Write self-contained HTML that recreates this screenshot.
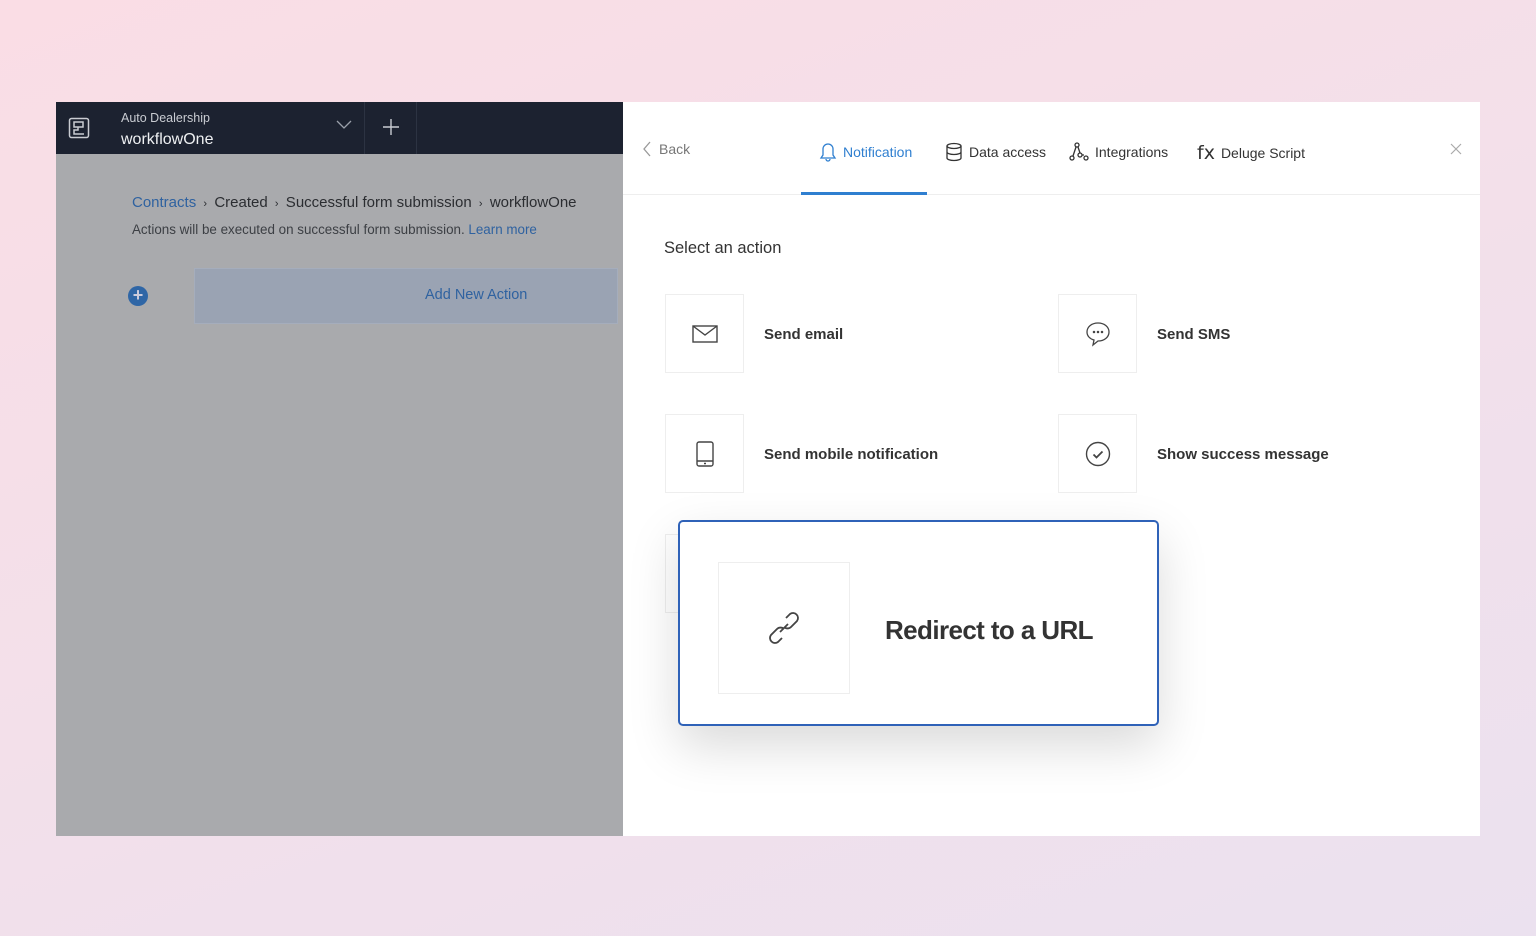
<!DOCTYPE html>
<html><head><meta charset="utf-8"><style>
*{margin:0;padding:0;box-sizing:border-box}
body{width:1536px;height:936px;overflow:hidden;font-family:"Liberation Sans",sans-serif;background:linear-gradient(160deg,#fadde5 0%,#f3e0ea 50%,#ebe1ef 100%);position:relative}
.left{position:absolute;left:56px;top:102px;width:567px;height:734px;background:#a9aaad}
.hdr{position:absolute;left:0;top:0;width:567px;height:52px;background:#1c2230;color:#e4e6ea}
.abs{position:absolute}
.right{position:absolute;left:623px;top:102px;width:857px;height:734px;background:#fff}
.tab{position:absolute;top:40px;font-size:14px;color:#333;display:flex;align-items:center;gap:6px}
.card{position:absolute;width:79px;height:79px;border:1px solid #eee;background:#fff;display:flex;align-items:center;justify-content:center}
.lbl{position:absolute;font-size:15px;font-weight:bold;color:#333}
</style></head><body>
<div class="left">
 <div class="hdr">
  <svg class="abs" style="left:12px;top:15px" width="22" height="22" viewBox="0 0 22 22" fill="none" stroke="#c9ccd2" stroke-width="1.5"><rect x="1.5" y="1.5" width="19" height="19" rx="2"/><rect x="6" y="5" width="9" height="5"/><path d="M10 10v3H6v4h10"/></svg>
  <div class="abs" style="left:65px;top:9px;font-size:12.5px;color:#c9ccd2">Auto Dealership</div>
  <div class="abs" style="left:65px;top:29px;font-size:16px;color:#eef0f2">workflowOne</div>
  <svg class="abs" style="left:280px;top:18px" width="16" height="10" viewBox="0 0 16 10" fill="none" stroke="#9aa0aa" stroke-width="1.3"><path d="M1 1l7 7 7-7"/></svg>
  <div class="abs" style="left:308px;top:0;width:1px;height:52px;background:#2c3342"></div>
  <div class="abs" style="left:360px;top:0;width:1px;height:52px;background:#2c3342"></div>
  <svg class="abs" style="left:326px;top:16px" width="18" height="18" viewBox="0 0 18 18" stroke="#c9ccd2" stroke-width="1.4"><path d="M9 1v16M1 9h16"/></svg>
 </div>
 <div class="abs" style="left:76px;top:92px;font-size:15px;color:#2b2d31;white-space:nowrap"><span style="color:#2f62a0">Contracts</span> <span style="font-size:11px">&nbsp;›&nbsp;</span> Created <span style="font-size:11px">&nbsp;›&nbsp;</span> Successful form submission <span style="font-size:11px">&nbsp;›&nbsp;</span> workflowOne</div>
 <div class="abs" style="left:76px;top:120px;font-size:13.4px;color:#3c3f44;white-space:nowrap">Actions will be executed on successful form submission. <span style="color:#2f62a0">Learn more</span></div>
 <div class="abs" style="left:72px;top:184px;width:20px;height:20px;border-radius:50%;background:#2f66a6;color:#ccd;font-size:18px;line-height:19px;text-align:center;font-weight:bold">+</div>
 <div class="abs" style="left:138px;top:166px;width:424px;height:56px;background:#9aa3b3;border:1px solid #a5adbc"></div>
 <div class="abs" style="left:369px;top:185px;color:#2f62a0;font-size:14.5px">Add New Action</div>
</div>
<div class="right">
 <div class="tab" style="left:18px;top:39px;color:#777">
  <svg width="12" height="16" viewBox="0 0 12 16" fill="none" stroke="#999" stroke-width="1.3"><path d="M9 1L3 8l6 7"/></svg>Back</div>
 <div class="tab" style="left:196px;color:#2f7fd0"><svg width="18" height="20" viewBox="0 0 18 20" fill="none" stroke="#2f7fd0" stroke-width="1.3"><path d="M9 2a5 5 0 0 0-5 5v6l-2 3h14l-2-3V7a5 5 0 0 0-5-5zM7 17a2 2 0 0 0 4 0"/></svg>Notification</div>
 <div class="tab" style="left:322px"><svg width="18" height="20" viewBox="0 0 18 20" fill="none" stroke="#333" stroke-width="1.3"><ellipse cx="9" cy="4" rx="7" ry="2.5"/><path d="M2 4v12c0 1.4 3 2.5 7 2.5s7-1.1 7-2.5V4M2 10c0 1.4 3 2.5 7 2.5s7-1.1 7-2.5"/></svg>Data access</div>
 <div class="tab" style="left:446px"><svg width="20" height="20" viewBox="0 0 20 20" fill="none" stroke="#333" stroke-width="1.3"><circle cx="8" cy="3" r="2"/><circle cx="3" cy="16" r="2"/><circle cx="17" cy="16" r="2"/><circle cx="11" cy="13" r="2"/><path d="M7 5l-3 9M9 5l2 6M13 13h2"/></svg>Integrations</div>
 <div class="tab" style="left:574px"><span style="font-size:19px;font-family:'DejaVu Sans',sans-serif">fx</span>Deluge Script</div>
 <svg class="abs" style="left:827px;top:41px" width="12" height="12" viewBox="0 0 12 12" stroke="#aaa" stroke-width="1.2"><path d="M1 1l10 10M11 1L1 11"/></svg>
 <div class="abs" style="left:0;top:92px;width:857px;height:1px;background:#eee"></div>
 <div class="abs" style="left:178px;top:90px;width:126px;height:3px;background:#2f7fd0"></div>
 <div class="abs" style="left:41px;top:137px;font-size:16.5px;color:#333">Select an action</div>
 <div class="card" style="left:42px;top:192px"><svg width="26" height="20" viewBox="0 0 26 20" fill="none" stroke="#444" stroke-width="1.4"><rect x="1" y="2" width="24" height="16"/><path d="M1 2l12 9 12-9"/></svg></div>
 <div class="lbl" style="left:141px;top:224px">Send email</div>
 <div class="card" style="left:435px;top:192px"><svg width="28" height="28" viewBox="0 0 28 28" fill="none" stroke="#444" stroke-width="1.3"><path d="M14 3C7.5 3 3 7 3 12c0 4 3 7 7 8l-1 5 5-4c6.5 0 11-4 11-9S20.5 3 14 3z"/><circle cx="10" cy="12" r=".6"/><circle cx="14" cy="12" r=".6"/><circle cx="18" cy="12" r=".6"/></svg></div>
 <div class="lbl" style="left:534px;top:224px">Send SMS</div>
 <div class="card" style="left:42px;top:312px"><svg width="20" height="28" viewBox="0 0 20 28" fill="none" stroke="#444" stroke-width="1.4"><rect x="2" y="2" width="16" height="24" rx="2"/><path d="M2 21h16M9 23.5h2"/></svg></div>
 <div class="lbl" style="left:141px;top:344px">Send mobile notification</div>
 <div class="card" style="left:435px;top:312px"><svg width="28" height="28" viewBox="0 0 28 28" fill="none" stroke="#444" stroke-width="1.4"><circle cx="14" cy="14" r="11.5"/><path d="M9.5 14.5l3 3 6-6" stroke-width="1.8"/></svg></div>
 <div class="lbl" style="left:534px;top:344px">Show success message</div>
 <div class="card" style="left:42px;top:432px"></div>
 <div class="abs" style="left:55px;top:418px;width:481px;height:206px;border:2px solid #2f62b8;border-radius:5px;background:#fff;box-shadow:0 20px 50px rgba(0,0,0,.15)">
  <div class="abs" style="left:38px;top:40px;width:132px;height:132px;border:1px solid #eee;display:flex;align-items:center;justify-content:center">
   <svg width="40" height="40" viewBox="0 0 40 40" fill="none" stroke="#444" stroke-width="1.8"><path d="M22 10l4-4a5 5 0 0 1 7 7l-6 6a5 5 0 0 1-7 0"/><path d="M18 30l-4 4a5 5 0 0 1-7-7l6-6a5 5 0 0 1 7 0"/><path d="M16 24l8-8"/></svg>
  </div>
  <div class="abs" style="left:205px;top:93px;font-size:26px;color:#333;font-weight:bold;letter-spacing:-.6px">Redirect to a URL</div>
 </div>
</div>
</body></html>
